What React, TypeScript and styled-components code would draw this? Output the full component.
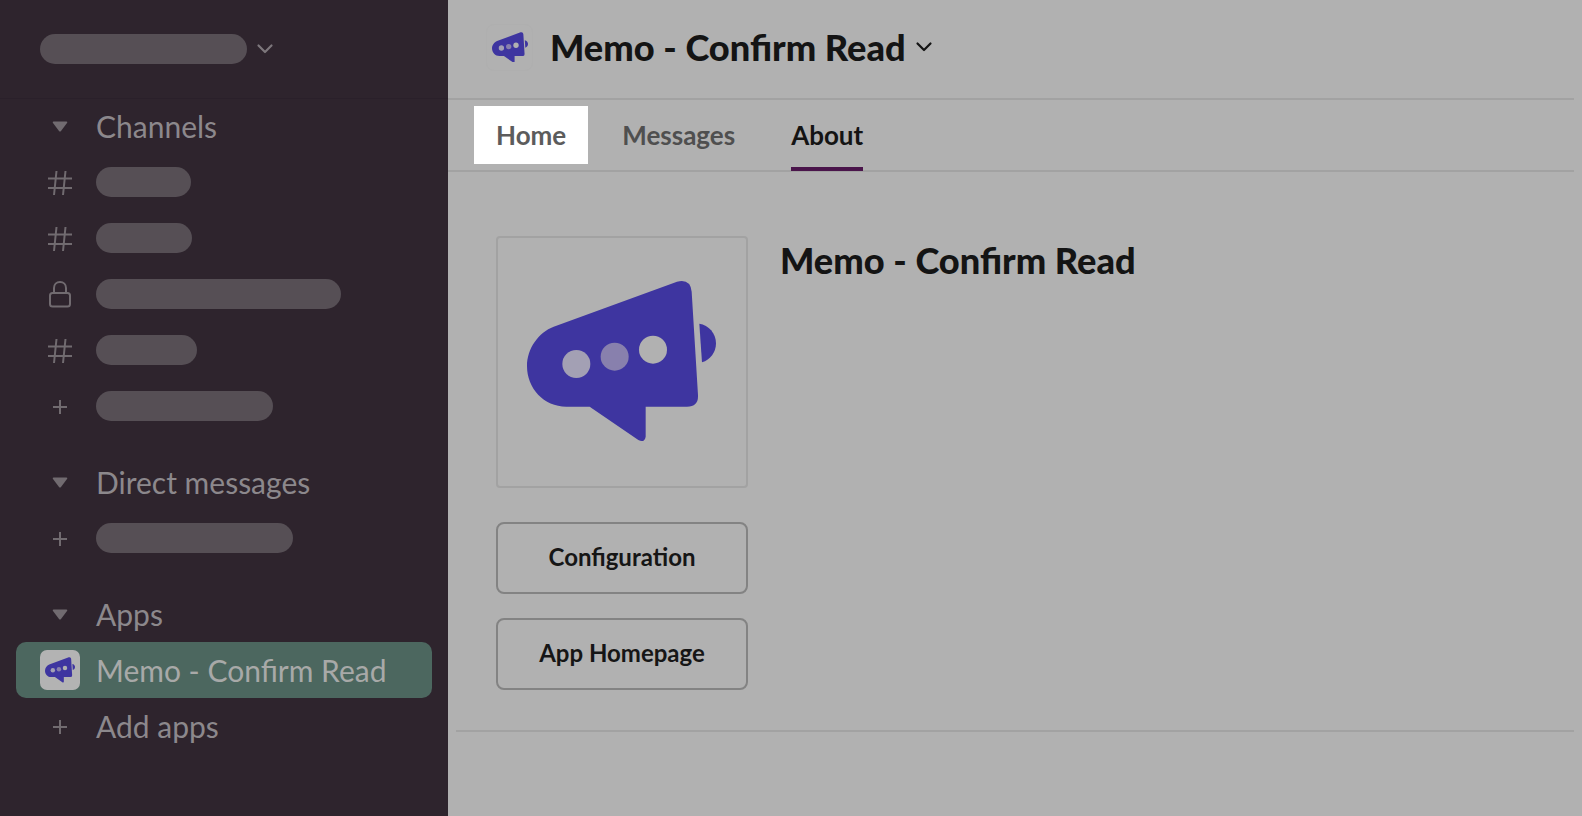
import React from 'react';
import styled, { createGlobalStyle } from 'styled-components';

const GlobalStyle = createGlobalStyle`
  html, body {
    margin: 0;
    padding: 0;
    height: 100%;
    overflow: hidden;
    background: #b1b1b1;
    font-family: Lato, "Liberation Sans", sans-serif;
  }
  * { box-sizing: border-box; }
`;

const Page = styled.div`
  display: flex;
  width: 1582px;
  height: 816px;
  overflow: hidden;
`;

const Sidebar = styled.aside`
  flex: 0 0 448px;
  background: #2e242d;
  color: #8c888c;
`;

const WorkspaceBar = styled.div`
  height: 98px;
  padding: 0 0 0 40px;
  display: flex;
  align-items: center;
  gap: 8px;
  box-shadow: 0 1px 0 #2a202a;
`;

const Pill = styled.div<{ $w: number }>`
  width: ${(p) => p.$w}px;
  height: 30px;
  border-radius: 15px;
  background: #564f55;
`;

const Section = styled.div`
  padding: 0 16px;
  margin-bottom: 20px;
`;

const Row = styled.div<{ $active?: boolean }>`
  height: 56px;
  display: flex;
  align-items: center;
  border-radius: 10px;
  font-size: 30px;
  color: ${(p) => (p.$active ? '#a8a9a8' : '#8c888c')};
  background: ${(p) => (p.$active ? '#4c675f' : 'transparent')};
`;

const RowIcon = styled.span`
  flex: 0 0 80px;
  display: flex;
  justify-content: center;
  align-items: center;
  padding-left: 8px;
  svg { display: block; }
`;

const AppTile = styled.span`
  width: 40px;
  height: 40px;
  border-radius: 7px;
  background: #b3b3b3;
  display: flex;
  align-items: center;
  justify-content: center;
`;

const Glyph = styled.svg<{ $drop: number }>`
  margin-top: ${(p) => p.$drop}px;
`;

const Main = styled.main`
  flex: 1;
  padding-right: 8px;
  display: flex;
  flex-direction: column;
`;

const Header = styled.header`
  height: 100px;
  padding: 0 0 4px 38px;
  display: flex;
  align-items: center;
  border-bottom: 2px solid #a2a2a2;
`;

const HeaderLogo = styled.span`
  width: 47px;
  height: 47px;
  margin-right: 17px;
  border-radius: 8px;
  border: 1px solid #afafaf;
  display: flex;
  align-items: center;
  justify-content: center;
`;

const Title = styled.h1`
  margin: 0 8px 0 0;
  font-size: 36.2px;
  font-weight: 900;
  color: #141414;
`;

const Tabs = styled.nav`
  height: 72px;
  padding: 6px 0 0 26px;
  display: flex;
  border-bottom: 2px solid #a2a2a2;
`;

const Tab = styled.div<{ $focus?: boolean; $selected?: boolean }>`
  height: ${(p) => (p.$focus ? '58px' : '65px')};
  padding: 0 ${(p) => (p.$focus ? '22px' : '0')};
  padding-bottom: ${(p) => (p.$focus ? '0' : p.$selected ? '3px' : '7px')};
  margin-right: ${(p) => (p.$focus ? '34px' : '56px')};
  display: flex;
  align-items: center;
  font-size: 26px;
  font-weight: 700;
  background: ${(p) => (p.$focus ? '#fff' : 'transparent')};
  color: ${(p) => (p.$focus ? '#5c5c5c' : p.$selected ? '#141414' : '#4f4f4f')};
  border-bottom: ${(p) => (p.$selected ? '4px solid #4a154b' : 'none')};
`;

const Body = styled.div`
  margin-left: 8px;
  padding: 64px 0 40px 40px;
  display: flex;
  gap: 32px;
  border-bottom: 2px solid #a2a2a2;
`;

const Aside = styled.div`
  width: 252px;
  display: flex;
  flex-direction: column;
`;

const LogoBox = styled.div`
  width: 252px;
  height: 252px;
  margin-bottom: 34px;
  padding: 0 2px 2px 0;
  border: 2px solid #a2a2a2;
  border-radius: 4px;
  display: flex;
  align-items: center;
  justify-content: center;
`;

const ActionButton = styled.div`
  height: 72px;
  margin-bottom: 24px;
  padding-bottom: 3px;
  border: 2px solid #838383;
  border-radius: 8px;
  display: flex;
  align-items: center;
  justify-content: center;
  font-size: 24px;
  font-weight: 700;
  color: #161616;
  &:last-child { margin-bottom: 0; }
`;

const AppName = styled.h2`
  margin: 2px 0 0;
  font-size: 36.2px;
  line-height: 44px;
  font-weight: 900;
  color: #141414;
`;

const MemoLogo = ({ width }: { width: number }) => (
  <svg width={width} viewBox="140 165 567 485" aria-hidden="true">
    <path
      fill="#3e35a0"
      d="M220 305 L590 170 Q630 160 634 200 L653 510 Q655 545 620 545 L496 545 L496 635 Q492 655 474 645 L328 545 L258 545 C190 545 140 490 140 423 C140 370 175 322 220 305 Z"
    />
    <path fill="#3e35a0" d="M657 296 C685 300 707 325 707 355 C707 382 690 405 665 412 Z" />
    <circle cx="288" cy="417" r="42" fill="#a3a0b4" />
    <circle cx="403" cy="395" r="42" fill="#8880ad" />
    <circle cx="518" cy="374" r="42" fill="#b1b1b1" />
  </svg>
);

const Chevron = ({ size, color }: { size: number; color: string }) => (
  <svg width={size} height={size} viewBox="0 0 20 20" fill="none" stroke={color} strokeWidth="2.2" strokeLinecap="round" strokeLinejoin="round" aria-hidden="true">
    <path d="M3.5 6.5 L10 13 L16.5 6.5" />
  </svg>
);

const Caret = () => (
  <svg width="16" height="11" viewBox="0 0 16 11" aria-hidden="true">
    <path d="M1.5 0.5 H14.5 Q16 0.5 15 2 L9 10 Q8 11 7 10 L1 2 Q0 0.5 1.5 0.5 Z" fill="#716b70" />
  </svg>
);

const Hash = () => (
  <Glyph $drop={1} width="26" height="26" viewBox="0 0 26 26" fill="none" stroke="#716b70" strokeWidth="2" aria-hidden="true">
    <path d="M9.5 1 L7 25 M18.5 1 L16 25 M1 8.5 H25 M1 18 H25" />
  </Glyph>
);

const Lock = () => (
  <svg width="24" height="28" viewBox="0 0 24 28" fill="none" stroke="#716b70" strokeWidth="2" aria-hidden="true">
    <path d="M6 13 V8 C6 4.5 8.5 2 12 2 C15.5 2 18 4.5 18 8 V13" />
    <rect x="2" y="13" width="20" height="13.5" rx="2.5" />
  </svg>
);

const Plus = () => (
  <Glyph $drop={2} width="16" height="16" viewBox="0 0 16 16" fill="none" stroke="#716b70" strokeWidth="2" aria-hidden="true">
    <path d="M8 1 V15 M1 8 H15" />
  </Glyph>
);

const App = () => {
  return (
    <>
      <GlobalStyle />
      <Page>
        <Sidebar>
          <WorkspaceBar>
            <Pill $w={207} />
            <Chevron size={20} color="#7d777c" />
          </WorkspaceBar>
          <Section>
            <Row><RowIcon><Caret /></RowIcon>Channels</Row>
            <Row><RowIcon><Hash /></RowIcon><Pill $w={95} /></Row>
            <Row><RowIcon><Hash /></RowIcon><Pill $w={96} /></Row>
            <Row><RowIcon><Lock /></RowIcon><Pill $w={245} /></Row>
            <Row><RowIcon><Hash /></RowIcon><Pill $w={101} /></Row>
            <Row><RowIcon><Plus /></RowIcon><Pill $w={177} /></Row>
          </Section>
          <Section>
            <Row><RowIcon><Caret /></RowIcon>Direct messages</Row>
            <Row><RowIcon><Plus /></RowIcon><Pill $w={197} /></Row>
          </Section>
          <Section>
            <Row><RowIcon><Caret /></RowIcon>Apps</Row>
            <Row $active>
              <RowIcon><AppTile><MemoLogo width={30} /></AppTile></RowIcon>
              Memo - Confirm Read
            </Row>
            <Row><RowIcon><Plus /></RowIcon>Add apps</Row>
          </Section>
        </Sidebar>
        <Main>
          <Header>
            <HeaderLogo><MemoLogo width={36} /></HeaderLogo>
            <Title>Memo - Confirm Read</Title>
            <Chevron size={20} color="#141414" />
          </Header>
          <Tabs>
            <Tab $focus>Home</Tab>
            <Tab>Messages</Tab>
            <Tab $selected>About</Tab>
          </Tabs>
          <Body>
            <Aside>
              <LogoBox><MemoLogo width={189} /></LogoBox>
              <ActionButton>Configuration</ActionButton>
              <ActionButton>App Homepage</ActionButton>
            </Aside>
            <AppName>Memo - Confirm Read</AppName>
          </Body>
        </Main>
      </Page>
    </>
  );
};

export default App;
